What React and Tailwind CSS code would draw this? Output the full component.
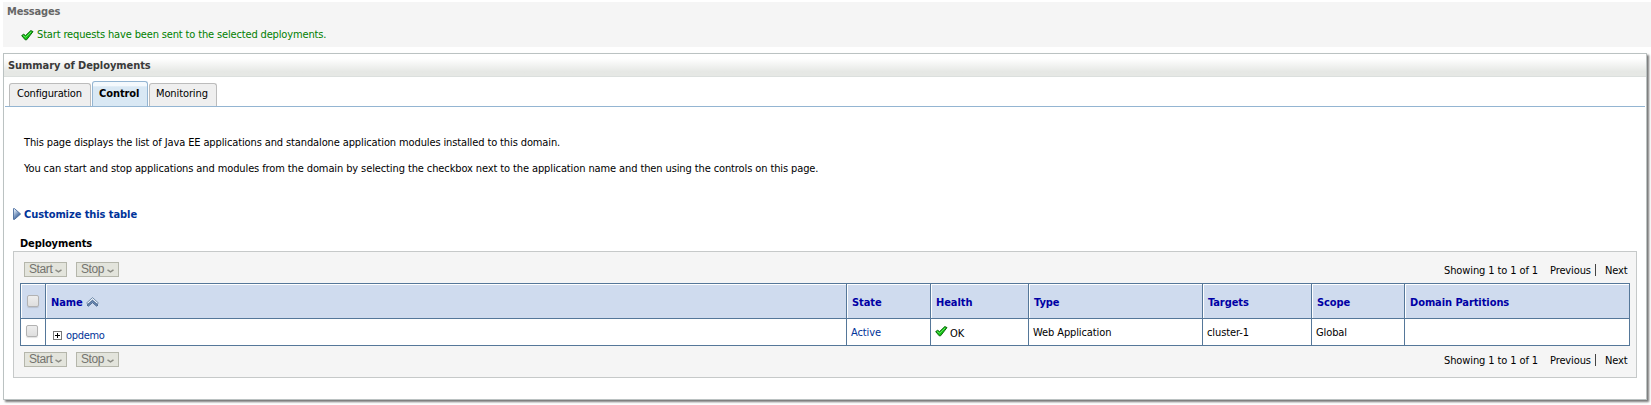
import React from 'react';

const COLUMNS = [
  { label: 'State', width: 'w-[84px]' },
  { label: 'Health', width: 'w-[98px]' },
  { label: 'Type', width: 'w-[174px]' },
  { label: 'Targets', width: 'w-[109px]' },
  { label: 'Scope', width: 'w-[93px]' },
  { label: 'Domain Partitions', width: 'w-[225px]' },
];

function CheckIcon() {
  return (
    <svg width="13" height="11" viewBox="0 0 13 11" className="block shrink-0">
      <path d="M0.7 5.6 L2.6 4.3 L4.6 5.6 L9.8 0.6 L12 1.6 L5.6 9.8 L4.2 9.8 Z" fill="#12c412" stroke="#0a640a" strokeWidth="1" strokeLinejoin="round" />
      <path d="M2.2 5.6 L4.7 7.2 L10.2 1.8" fill="none" stroke="#6fe96f" strokeWidth="0.9" />
    </svg>
  );
}

function Checkbox() {
  return <span className="block h-[12px] w-[12px] shrink-0 rounded-[2px] border border-[#b2b2b2] bg-linear-to-b from-[#ededed] to-[#dedede] shadow-[0_1px_1px_rgba(0,0,0,0.12)]" />;
}

function MenuButton({ label }) {
  return (
    <button className="flex h-[15px] w-[43px] items-start border border-[#b5b6ab] bg-[#e3e4dc] pl-[4px] font-['Liberation_Sans',Arial,sans-serif] text-[12px] leading-[13px] tracking-[-0.4px] text-[#73736e]">
      <span className="w-[26px] text-left">{label}</span>
      <svg width="7" height="4" viewBox="0 0 7 4" className="mt-[6px] shrink-0">
        <path d="M0.5 0.8 L3.5 2.8 L6.5 0.8" fill="none" stroke="#8b8b84" strokeWidth="1.4" />
      </svg>
    </button>
  );
}

function Toolbar() {
  return (
    <div className="flex h-[15px] justify-between pl-[4px] pr-[3px]">
      <div className="flex gap-[9px]">
        <MenuButton label="Start" />
        <MenuButton label="Stop" />
      </div>
      <div className="mt-px flex h-[14px] leading-[15px]">
        <span className="w-[106px]">Showing 1 to 1 of 1</span>
        <span className="w-[45px]">Previous</span>
        <span className="mt-px mr-[9px] h-[12px] w-px bg-[#444]" />
        <span className="w-[22px]">Next</span>
      </div>
    </div>
  );
}

function Tab({ children, className }) {
  return <div className={`h-[23px] rounded-t-[3px] border border-b-0 border-[#bcbcbc] bg-[#efefef] pt-[2px] leading-[15px] ${className}`}>{children}</div>;
}

export default function App() {
  const head = "h-[35px] border-r border-b border-[#557799] bg-[#cfdbee] pt-[11px] leading-[15px] font-bold tracking-[-0.07px] text-[#0000a5] shadow-[inset_1px_1px_0_#fff]";
  const cell = "h-[27px] border-r border-b border-[#557799] bg-white leading-[15px]";
  return (
    <div className="h-[405px] w-[1651px] overflow-hidden bg-white pt-[2px] pl-[3px] font-['DejaVu_Sans_Condensed','DejaVu_Sans',sans-serif] text-[11px] leading-[15px] tracking-[-0.11px] whitespace-nowrap text-black">
      <section className="h-[45px] bg-[#f5f5f5] pt-[2px]">
        <h2 className="pl-[4px] font-bold tracking-[-0.2px] text-[#666]">Messages</h2>
        <div className="mt-[8px] flex pl-[18px]">
          <span className="mt-[3px]"><CheckIcon /></span>
          <span className="ml-[3px] tracking-[-0.15px] text-[#008000]">Start requests have been sent to the selected deployments.</span>
        </div>
      </section>

      <section className="mt-[6px] h-[347px] w-[1644px] border border-[#bbc2c2] bg-white shadow-[2px_2px_2px_#777]">
        <h1 className="h-[23px] border-b border-[#dbdfdd] bg-linear-to-b from-white from-20% to-[#e6e8e5] to-80% pt-[4px] pl-[4px] font-bold tracking-[-0.07px] text-[#3a3a3a]">Summary of Deployments</h1>
        <nav className="mx-px flex h-[30px] items-end border-b border-[#94b5d2] pl-[4px]">
          <Tab className="w-[82px] pl-[7px] tracking-[-0.18px]">Configuration</Tab>
          <div className="ml-px h-[25px] w-[56px] rounded-t-[3px] border border-b-0 border-[#94b5d2] bg-linear-to-b from-[#f4f9fd] from-16% to-[#d9e8f4] to-20% pt-[4px] pl-[6px] font-bold tracking-[-0.07px]">Control</div>
          <Tab className="ml-px w-[68px] pl-[6px]">Monitoring</Tab>
        </nav>

        <div className="pt-[28px] pl-[20px]">
          <p className="tracking-[-0.12px]">This page displays the list of Java EE applications and standalone application modules installed to this domain.</p>
          <p className="mt-[11px]">You can start and stop applications and modules from the domain by selecting the checkbox next to the application name and then using the controls on this page.</p>
        </div>

        <div className="mt-[31px] flex h-[15px] pl-[9px] font-bold tracking-[-0.07px] text-[#003399]">
          <svg width="9" height="13" viewBox="0 0 9 13" className="mt-px mr-[2px] block">
            <defs>
              <linearGradient id="disclosure" x1="0" y1="0" x2="0.7" y2="1">
                <stop offset="0.15" stopColor="#dbe8f7" />
                <stop offset="0.8" stopColor="#44699f" />
              </linearGradient>
            </defs>
            <path d="M0.5 0.6 H1.5 L7.6 6 L1.5 11.4 H0.5 Z" fill="url(#disclosure)" stroke="#4a6c9d" strokeWidth="0.9" />
          </svg>
          <span>Customize this table</span>
        </div>

        <h3 className="mt-[14px] pl-[16px] font-bold tracking-[-0.12px]">Deployments</h3>

        <div className="ml-[9px] h-[127px] w-[1624px] border border-[#c6c9c9] bg-[#f5f5f5] pt-[10px] pl-[6px]">
          <div className="w-[1610px]">
            <Toolbar />
            <div className="mt-[6px] border-t border-l border-[#557799]">
              <div className="flex">
                <div className={`${head} w-[25px] pl-[6px]`}><Checkbox /></div>
                <div className={`${head} flex w-[801px] pl-[5px]`}>
                  <span>Name</span>
                  <svg width="13" height="10" viewBox="0 0 13 10" className="mt-[2px] ml-[3px]">
                    <path d="M0.6 6 L6.5 0.6 L12.4 6 L11 7.2 L6.5 3.2 L2 7.2 Z" fill="#eaf2fb" stroke="#5b7698" strokeWidth="0.8" />
                    <path d="M2 7.4 L6.5 3.4 L11 7.4 L12 8 L10.6 9.2 L6.5 5.6 L2.4 9.2 L1 8 Z" fill="#6f8fb8" stroke="#39557f" strokeWidth="0.8" />
                  </svg>
                </div>
                {COLUMNS.map((c) => (
                  <div key={c.label} className={`${head} ${c.width} pl-[5px]`}>{c.label}</div>
                ))}
              </div>
              <div className="flex">
                <div className={`${cell} w-[25px] pt-[6px] pl-[5px]`}><Checkbox /></div>
                <div className={`${cell} flex w-[801px] pt-[9px] pl-[7px] text-[#003399]`}>
                  <svg width="9" height="9" viewBox="0 0 9 9" shapeRendering="crispEdges" className="mt-[3px] mr-[4px]">
                    <rect x="0.5" y="0.5" width="8" height="8" fill="#fff" stroke="#777" />
                    <path d="M2 4.5 H7 M4.5 2 V7" stroke="#000" />
                  </svg>
                  <span className="tracking-[-0.3px]">opdemo</span>
                </div>
                <div className={`${cell} w-[84px] pt-[6px] pl-[4px] text-[#003399]`}>Active</div>
                <div className={`${cell} flex w-[98px] pt-[6px] pl-[4px]`}>
                  <span className="mt-px"><CheckIcon /></span>
                  <span className="mt-px ml-[2px]">OK</span>
                </div>
                <div className={`${cell} w-[174px] pt-[6px] pl-[4px]`}>Web Application</div>
                <div className={`${cell} w-[109px] pt-[6px] pl-[4px]`}>cluster-1</div>
                <div className={`${cell} w-[93px] pt-[6px] pl-[4px]`}>Global</div>
                <div className={`${cell} w-[225px]`} />
              </div>
            </div>
            <div className="mt-[6px]"><Toolbar /></div>
          </div>
        </div>
      </section>
    </div>
  );
}
